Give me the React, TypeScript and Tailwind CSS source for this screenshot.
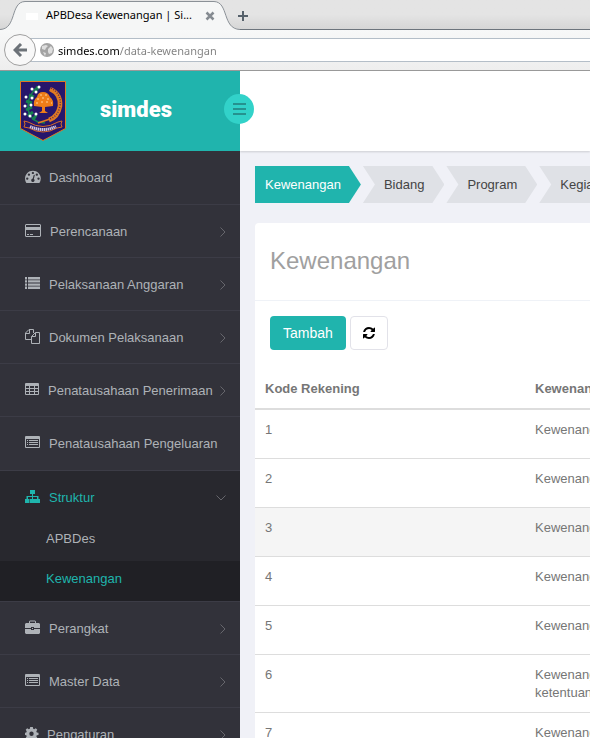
import type { ReactNode } from "react";

type IconName = "gauge" | "card" | "list" | "copy" | "table" | "listAlt" | "sitemap" | "briefcase" | "cog";

const SHAPES: Record<IconName, [number, ReactNode]> = {
  gauge: [16, <path key="a" transform="scale(0.0088) translate(0 -60)" d="M384 1152q0-53-37.500-90.500t-90.500-37.500-90.500 37.500-37.500 90.500 37.500 90.500 90.500 37.500 90.500-37.500 37.500-90.500zm192-448q0-53-37.500-90.500t-90.500-37.500-90.500 37.500-37.500 90.500 37.500 90.500 90.500 37.500 90.500-37.500 37.500-90.500zm428 481l101-382q6-26-7.500-48.500t-38.500-29.500-48 6.500-30 39.500l-101 382q-60 5-107 43.500t-63 98.500q-20 77 20 146t117 89 146-20 89-117q16-60-6-117t-72-91zm660-33q0-53-37.500-90.500t-90.500-37.500-90.500 37.500-37.500 90.500 37.500 90.500 90.500 37.500 90.500-37.500 37.500-90.500zm-640-640q0-53-37.500-90.500t-90.500-37.500-90.500 37.500-37.500 90.500 37.500 90.500 90.500 37.500 90.500-37.500 37.500-90.500zm448 192q0-53-37.500-90.500t-90.500-37.500-90.500 37.500-37.500 90.500 37.500 90.500 90.500 37.500 90.500-37.500 37.500-90.500zm320 448q0 261-141 483-19 29-54 29h-1402q-35 0-54-29-141-221-141-483 0-182 71-348t191-286 286-191 348-71 348 71 286 191 191 286 71 348z" />],
  card: [17, <path key="a" fillRule="evenodd" d="M1 1h14l1 1v11l-1 1H1l-1-1V2zM1 2v2h14V2zM1 7v6h14V7zM2 11h2v1H2zM5 11h3v1H5z" />],
  list: [16, <path key="a" d="M0 1h2v2.400H0zM3 1h12v2.400H3zM0 4.200h2v2.400H0zM3 4.200h12v2.400H3zM0 7.400h2v2.400H0zM3 7.400h12v2.400H3zM0 10.600h2V13H0zM3 10.600h12V13H3z" />],
  copy: [16, <g key="a" fill="none" stroke="currentColor"><path d="M6 10.500H.5V4L4 .5h4.500V4M4.500.5v4H.5" /><path d="M6.500 7.500l4-4h4v11h-8zM10.500 3.500v4h-4" /></g>],
  table: [15, <g key="a"><rect width="14" height="12" y="1" rx="1" /><path fill="#32323a" d="M1 4h3v2H1zM5 4h4v2H5zM10 4h3v2h-3zM1 7h3v2H1zM5 7h4v2H5zM10 7h3v2h-3zM1 10h3v2H1zM5 10h4v2H5zM10 10h3v2h-3z" /></g>],
  listAlt: [16, <g key="a"><rect width="15" height="12" y="1" rx="1" /><path fill="#32323a" d="M1 4h13v8H1z" /><path d="M2 5h1v1H2zM4 5h9v1H4zM2 7h1v1H2zM4 7h9v1H4zM2 9h1v1H2zM4 9h9v1H4z" /></g>],
  sitemap: [16, <path key="a" d="M5 1h5v4H8v2h5.500v3H15v4h-5v-4h2V8H8v2h2v4H5v-4h2V8H3v2h1.500v4H0v-4h1.500V7H7V5H5z" />],
  briefcase: [16, <path key="a" fillRule="evenodd" d="M4 3V1.500l1-1h5l1 1V3h3l1 1v4H9V7H6v1H0V4l1-1zM5 3h5V1.500H5zM0 9h6v1h3V9h6v4l-1 1H1l-1-1zM7 8h1v1H7z" />],
  cog: [14, <path key="a" fillRule="evenodd" d="M5.200 1h2.600l.4 1.800 1 .4 1.600-1 1.500 1.600-1 1.500.5 1.100 1.700.3v2.200l-1.700.4-.5 1 1 1.600-1.500 1.500-1.600-1-1 .4-.4 1.800H5.200l-.4-1.800-1-.4-1.600 1-1.500-1.500 1-1.600-.4-1L0 8.900V6.700l1.300-.3.4-1.100-1-1.500 1.500-1.600 1.600 1 1-.4zM6.500 5.500a2.200 2.200 0 1 0 0 4.400 2.200 2.200 0 0 0 0-4.400z" />],
};

function MenuIcon({ name }: { name: IconName }) {
  const [width, shape] = SHAPES[name];
  return (
    <svg
      width={width}
      height="15"
      viewBox={`0 0 ${width} 15`}
      fill="currentColor"
      className="mr-2 mb-1 shrink-0"
      aria-hidden="true"
    >
      {shape}
    </svg>
  );
}

function Chevron({ down = false }: { down?: boolean }) {
  return down ? (
    <svg width="10" height="10" viewBox="0 0 10 10" fill="none" stroke="#66666c" className="ml-auto shrink-0" aria-hidden="true">
      <path d="M.5 2.500L5 7l4.500-4.500" />
    </svg>
  ) : (
    <svg width="6" height="10" viewBox="0 0 6 10" fill="none" stroke="#66666c" className="ml-auto shrink-0" aria-hidden="true">
      <path d="M.5.5L5 5 .5 9.500" />
    </svg>
  );
}

function MenuItem({ icon, label, arrow = true }: { icon: IconName; label: string; arrow?: boolean }) {
  return (
    <li className="border-t border-[#3c3c46] first:border-t-0 first:pb-px">
      <a href="#" className="flex h-13 items-center pt-0.5 pr-3.5 pl-[25px]">
        <MenuIcon name={icon} />
        <span className="whitespace-nowrap">{label}</span>
        {arrow && <Chevron />}
      </a>
    </li>
  );
}

function Emblem() {
  return (
    <svg width="46" height="60" viewBox="0 0 46 60" aria-label="Emblem" role="img">
      <path d="M.5.5h45v47L23 59.500.5 47.500z" fill="#27166b" stroke="#e07820" />
      <path d="M18 6Q8 13 8 25t10 16l7 1" fill="none" stroke="#158050" strokeWidth="1.500" />
      <path d="M14 8l3 3M9 14l5 2M6 20l6 2M6 29l6-3M8 35l5-4M13 39l3-5M16 6l3 2" stroke="#158050" strokeWidth="3" />
      <g fill="#fff">
        <circle cx="19" cy="6" r="1.500" /><circle cx="12" cy="8" r="1.500" /><circle cx="16" cy="11" r="1.500" />
        <circle cx="6" cy="16" r="1.500" /><circle cx="12" cy="17" r="1.500" /><circle cx="5" cy="25" r="1.500" />
        <circle cx="11" cy="24" r="1.500" /><circle cx="5" cy="33" r="1.500" /><circle cx="10" cy="35" r="1.500" /><circle cx="16" cy="33" r="1.500" />
      </g>
      <path d="M30 8q11 5 10 17-2 11-11 14" fill="none" stroke="#e07a22" strokeWidth="4.500" />
      <path d="M31 7q11 6 9 18-2 10-10 13" fill="none" stroke="#5a2c55" strokeWidth="1.500" strokeDasharray="1 1.500" />
      <path d="M30 38l-12 4" stroke="#e07a22" strokeWidth="1.500" />
      <path d="M14 25q-1-6 3-9 1-5 6-5t7 5q4 3 3 9l-8 1v4l3 2h-9l3-2v-4z" fill="#ee7d18" />
      <path d="M20 14h2m3 0h2m-10 4h2m3-1h2m3 1h2m-13 4h2m3-1h2m3 0h2m3 1h1" stroke="#ffd39a" />
      <path d="M4 40l4 1q15 9 30 0l4-1-1 3 1 3-5 1q-14 8-28 0l-5-1 1-3z" fill="#27166b" stroke="#d56b2a" />
      <path d="M10 45.500q13 6 26 0" fill="none" stroke="#cfc6e0" strokeWidth="3" strokeDasharray="1.500 .5" />
    </svg>
  );
}

function BrowserChrome() {
  return (
    <div className="font-['Noto_Sans',sans-serif] text-[11px] text-black">
      <div className="relative h-[30px] border-b border-[#6d757d] bg-linear-to-b from-[#e4e4e4] from-50% to-[#d6d6d6]">
        <svg width="240" height="30" viewBox="0 0 240 30" className="absolute top-0 left-0" aria-hidden="true">
          <path d="M0 29.500C17 29 10 2 25 1.500h189C229 2 222 29 240 29.500V30H0z" fill="#f5f6f6" />
          <path d="M0 29.500C17 29 10 2 25 1.500h189C229 2 222 29 240 29.500" fill="none" stroke="#8b9197" />
          <path d="M26 13h12v7H26z" fill="#fff" />
        </svg>
        <div className="relative flex h-full items-center pt-0.5 pl-[46px]">
          <span className="w-[159px] whitespace-nowrap">APBDesa Kewenangan | Si...</span>
          <button aria-label="Close tab" className="mr-[23px] flex">
            <svg width="10" height="10" viewBox="0 0 10 10" stroke="#858b91" strokeWidth="2.500"><path d="M1.500 1.500l7 7m0-7l-7 7" /></svg>
          </button>
          <button aria-label="New tab" className="flex">
            <svg width="10" height="10" viewBox="0 0 10 10" stroke="#56616b" strokeWidth="2"><path d="M5 0v10M0 5h10" /></svg>
          </button>
        </div>
      </div>
      <div className="relative h-[41px] border-b border-[#999] bg-linear-to-b from-[#f7f8f8] to-[#eeeeee] pt-2 pl-5">
        <div className="flex h-6 items-center border-y border-[#b4bec8] bg-white pl-[38px]">
          <input
            type="text"
            aria-label="Address"
            defaultValue="simdes.com/data-kewenangan"
            className="w-full bg-linear-to-r from-black from-[62px] to-[#808080] to-[62px] bg-clip-text pt-0.5 text-transparent outline-none"
          />
        </div>
        <button aria-label="Back" className="absolute top-1 left-1 flex size-8 items-center justify-center rounded-full border border-[#a0a0a0] bg-[#f8f8f8]">
          <svg width="14" height="14" viewBox="0 0 14 14" fill="none" stroke="#6c7278" strokeWidth="3"><path d="M8 1L2 7l6 6M2 7h12" /></svg>
        </button>
        <svg width="14" height="14" viewBox="0 0 14 14" className="absolute top-[13px] left-10" aria-hidden="true">
          <circle cx="7" cy="7" r="7" fill="#a3a3a3" />
          <path d="M2 3l4-1 2 1-2 2-1 2-3-1zM8 6l3-3 2 3-1 4-3 1-1-2zM3 9l3 1-1 3z" fill="#dedede" />
        </svg>
      </div>
    </div>
  );
}

const STEPS = ["Kewenangan", "Bidang", "Program", "Kegiatan"];
const ROWS = [
  ["1", "Kewenangan"], ["2", "Kewenangan"], ["3", "Kewenangan"], ["4", "Kewenangan"], ["5", "Kewenangan"],
  ["6", "Kewenangan ketentuan"], ["7", "Kewenangan"],
];

export default function App() {
  return (
    <div className="flex h-screen flex-col overflow-hidden bg-[#f0f1f7] font-['Liberation_Sans',Arial,sans-serif] text-[13px] text-[#767676]">
      <BrowserChrome />
      <header className="flex h-20 shrink-0">
        <div className="relative flex w-60 shrink-0 items-center bg-[#20b4ad] pl-5">
          <Emblem />
          <span className="ml-[34px] pb-1 font-[Impact,Roboto,sans-serif] text-[22px] font-black text-white">simdes</span>
          <button aria-label="Toggle menu" className="absolute top-[23px] -right-3.5 z-10 flex size-[30px] items-center justify-center rounded-full bg-[#32d2c9]">
            <svg width="13" height="12" viewBox="0 0 13 12" fill="#25928f"><path d="M0 0h13v2H0zM0 5h13v2H0zM0 10h13v2H0z" /></svg>
          </button>
        </div>
        <div className="grow bg-white shadow-[0_1px_2px_rgba(0,0,0,0.15)]" />
      </header>
      <div className="flex min-h-0 grow">
        <nav className="w-60 shrink-0 overflow-hidden bg-[#32323a] text-[#aeb2b7]">
          <ul>
            <MenuItem icon="gauge" label="Dashboard" arrow={false} />
            <MenuItem icon="card" label="Perencanaan" />
            <MenuItem icon="list" label="Pelaksanaan Anggaran" />
            <MenuItem icon="copy" label="Dokumen Pelaksanaan" />
            <MenuItem icon="table" label="Penatausahaan Penerimaan" />
            <MenuItem icon="listAlt" label="Penatausahaan Pengeluaran" arrow={false} />
            <li className="mt-px border-t border-[#3c3c46] bg-[#28282e]">
              <a href="#" className="flex h-[50px] items-center pt-1 pr-3.5 pl-[25px] text-[#1fb5ad]">
                <MenuIcon name="sitemap" />
                <span>Struktur</span>
                <Chevron down />
              </a>
              <ul>
                <li><a href="#" className="flex h-10 items-center pb-1 pl-[46px]">APBDes</a></li>
                <li><a href="#" className="flex h-10 items-center bg-[#202025] pb-1 pl-[46px] text-[#1fb5ad]">Kewenangan</a></li>
              </ul>
            </li>
            <MenuItem icon="briefcase" label="Perangkat" />
            <MenuItem icon="listAlt" label="Master Data" />
            <MenuItem icon="cog" label="Pengaturan" />
          </ul>
        </nav>
        <main className="min-w-0 grow overflow-hidden pt-[15px] pl-[15px]">
          <ol className="flex gap-0.5">
            {STEPS.map((step, i) => (
              <li key={step} className="shrink-0">
                <a
                  href="#"
                  className={
                    i === 0
                      ? "flex h-[37px] items-center bg-[#20b4ad] pr-5 pl-2.5 text-white [clip-path:polygon(0_0,calc(100%-12px)_0,100%_50%,calc(100%-12px)_100%,0_100%)]"
                      : "flex h-[37px] items-center bg-[#dfe1e6] pr-5 pl-[21px] text-[#444] [clip-path:polygon(0_0,calc(100%-12px)_0,100%_50%,calc(100%-12px)_100%,0_100%,12px_50%)]"
                  }
                >
                  {step}
                </a>
              </li>
            ))}
          </ol>
          <section className="mt-5 rounded-tl bg-white">
            <h1 className="flex h-[78px] items-center border-b border-[#eff2f7] pb-0.5 pl-[15px] text-2xl text-[#a0a0a0]">Kewenangan</h1>
            <div className="flex gap-1 pt-[15px] pl-[15px]">
              <button className="h-[34px] rounded bg-[#20b4ad] px-[13px] text-sm text-white">Tambah</button>
              <button aria-label="Refresh" className="flex h-[34px] w-[38px] items-center justify-center rounded border border-[#e2e2e9] bg-white text-black">
                <svg width="12" height="12" viewBox="0 0 1536 1536" fill="currentColor">
                  <path d="M1511 928q0 5-1 7-64 268-268 434.500T764 1536q-146 0-282.500-55T238 1324l-129 129q-19 19-45 19t-45-19-19-45V960q0-26 19-45t45-19h448q26 0 45 19t19 45-19 45l-137 137q71 66 161 102t187 36q134 0 250-65t186-179q11-17 53-117 8-23 30-23h192q13 0 22.500 9.500t9.500 22.500zm25-800v448q0 26-19 45t-45 19h-448q-26 0-45-19t-19-45 19-45l138-138Q969 256 768 256q-134 0-250 65T332 500q-11 17-53 117-8 23-30 23H50q-13 0-22.500-9.500T18 608v-7q65-268 270-434.500T768 0q146 0 284 55.500T1297 212l130-129q19-19 45-19t45 19 19 45z" />
                </svg>
              </button>
            </div>
            <table className="mt-[18px] w-full table-fixed text-left">
              <thead>
                <tr className="h-[41px] border-b-2 border-[#ddd]">
                  <th className="w-[270px] px-2.5 pt-0.5 font-bold">Kode Rekening</th>
                  <th className="px-2.5 pt-0.5 font-bold">Kewenangan</th>
                </tr>
              </thead>
              <tbody>
                {ROWS.map(([code, name]) => (
                  <tr key={code} className={code === "3" ? "h-[49px] border-b border-[#ddd] bg-[#f5f5f5]" : "h-[49px] border-b border-[#ddd]"}>
                    <td className="px-2.5 pt-[11px] pb-2.5 align-top leading-[18px]">{code}</td>
                    <td className="px-2.5 pt-[11px] pb-2.5 align-top leading-[18px]">{name}</td>
                  </tr>
                ))}
              </tbody>
            </table>
          </section>
        </main>
      </div>
    </div>
  );
}
